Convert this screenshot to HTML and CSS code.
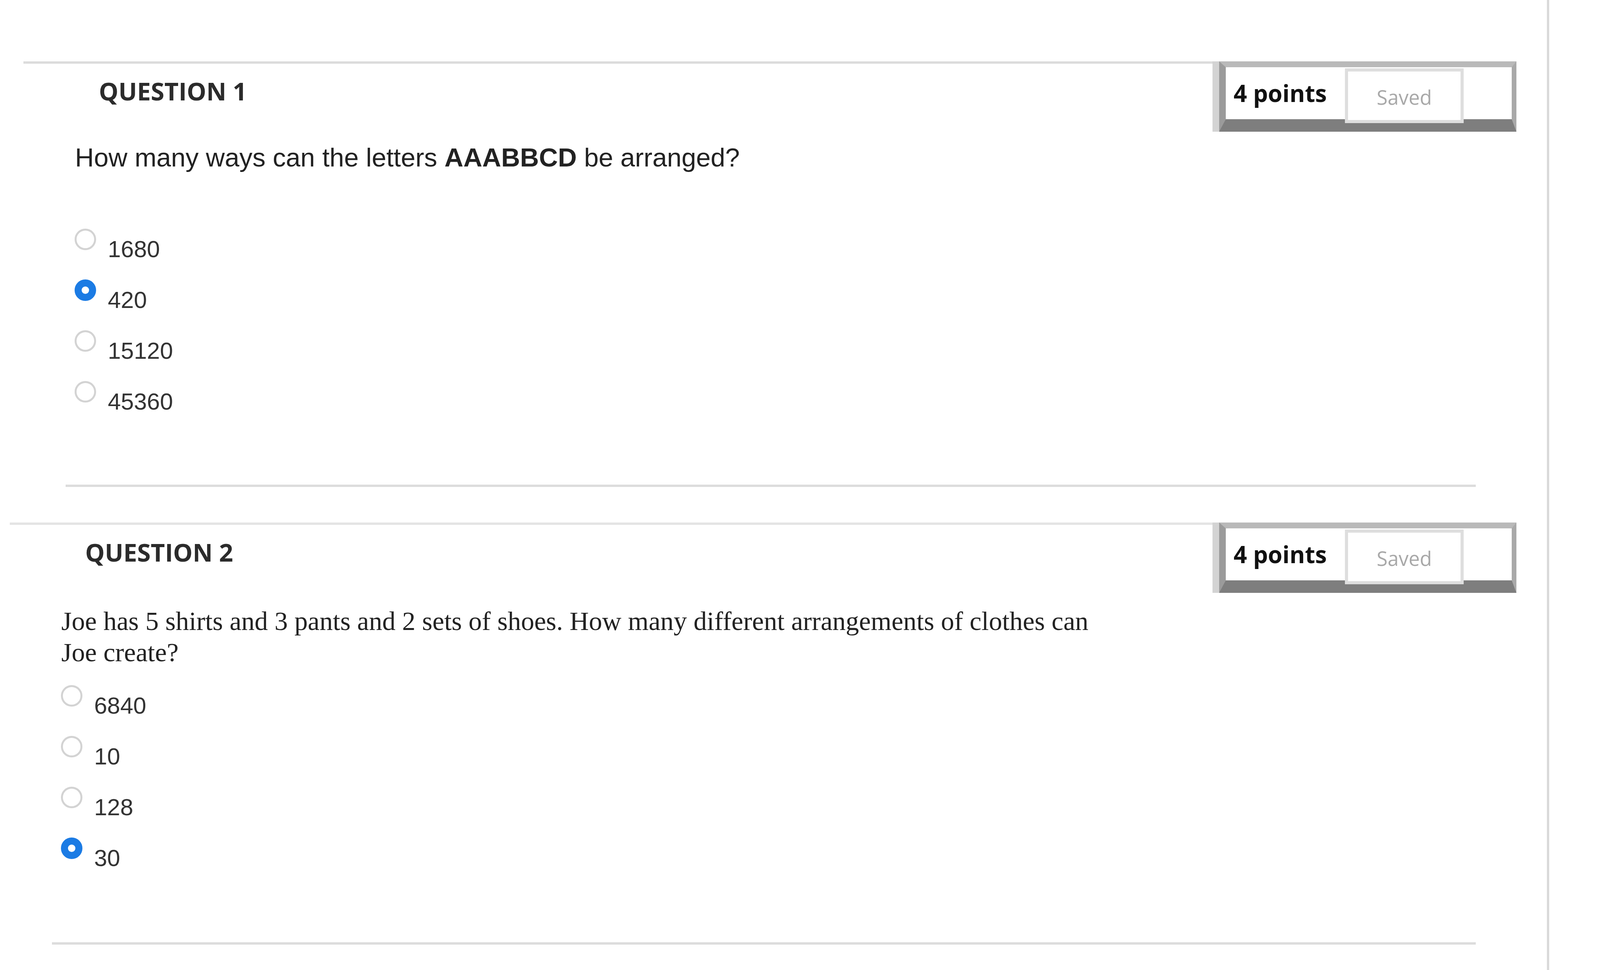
FILE: index.html
```html
<!DOCTYPE html>
<html lang="en">
<head>
  <meta charset="UTF-8" />
  <meta name="viewport" content="width=device-width, initial-scale=1.0"/>
  <title>Take Test: Counting</title>
  <link rel="stylesheet" href="styles.css">
</head>
<body>
  <div class="page">

    <!-- Question 1 -->
    <div class="question q1">
      <div class="q-header">
        <div class="q-rule"><h3 class="q-title">QUESTION 1</h3></div>
        <div class="points-box">
          <span class="points">4 points</span>
          <span class="saved">Saved</span>
        </div>
      </div>
      <p class="q-text">How many ways can the letters <b>AAABBCD</b> be arranged?</p>
      <ul class="answers">
        <li><input class="radio" type="radio" name="q1"><label>1680</label></li>
        <li><input class="radio" type="radio" name="q1" checked><label>420</label></li>
        <li><input class="radio" type="radio" name="q1"><label>15120</label></li>
        <li><input class="radio" type="radio" name="q1"><label>45360</label></li>
      </ul>
      <hr class="q-sep">
    </div>

    <!-- Question 2 -->
    <div class="question q2">
      <div class="q-header">
        <div class="q-rule"><h3 class="q-title">QUESTION 2</h3></div>
        <div class="points-box">
          <span class="points">4 points</span>
          <span class="saved">Saved</span>
        </div>
      </div>
      <p class="q-text serif">Joe has 5 shirts and 3 pants and 2 sets of shoes. How many different arrangements of clothes can Joe create?</p>
      <ul class="answers">
        <li><input class="radio" type="radio" name="q2"><label>6840</label></li>
        <li><input class="radio" type="radio" name="q2"><label>10</label></li>
        <li><input class="radio" type="radio" name="q2"><label>128</label></li>
        <li><input class="radio" type="radio" name="q2" checked><label>30</label></li>
      </ul>
      <hr class="q-sep">
    </div>

  </div>
</body>
</html>
```

FILE: styles.css
```css
body {
  margin: 0;
  background: #fff;
  font-family: "Liberation Sans", Arial, sans-serif;
  color: #222;
}

.page {
  width: 3966px;
  min-height: 2482px;
  box-sizing: border-box;
  padding-top: 157px;
  border-right: 6px solid #dadada;
}

.question {
  margin-right: 78px;
}

.q1 { margin-left: 60px; }
.q2 { margin-left: 25px; margin-top: 91px; }

/* Header: rule + points box */
.q-header {
  display: flex;
  align-items: flex-start;
}

.q-rule {
  flex: 1;
  border-top: 6px solid #dcdcdc;
}

.q2 .q-rule {
  border-top-color: #e4e4e4;
}

.q-title {
  margin: 0;
  padding: 28px 0 0 193px;
  font: 700 63px/84px "Open Sans", sans-serif;
  color: #2b2b2b;
}

.points-box {
  display: flex;
  align-items: flex-start;
  width: 732px;
  height: 133px;
  background: #fff;
  border-style: solid;
  border-width: 15px 12px 32px 17px;
  border-color: #b9b9b9 #a9a9a9 #7e7e7e #9b9b9b;
  box-shadow: -17px 0 0 #d3d3d3;
}

.points {
  width: 285px;
  padding: 24px 0 0 20px;
  font: 700 60px/84px "Open Sans", sans-serif;
  color: #111;
}

.saved {
  margin-top: 3px;
  width: 304px;
  height: 140px;
  box-sizing: border-box;
  border: 8px solid #dedede;
  background: #fff;
  display: flex;
  align-items: center;
  justify-content: center;
  padding-top: 6px;
  font: 400 51px "Open Sans", sans-serif;
  color: #a8a8a8;
}

/* Question text */
.q-text {
  margin: 30px 0 146px 132px;
  font-size: 67px;
  line-height: 72px;
  color: #222;
}

.q-text.serif {
  max-width: 2700px;
  margin-top: 32px;
  margin-bottom: 44px;
  font-family: "Liberation Serif", "Times New Roman", serif;
  font-size: 68px;
  line-height: 80px;
}

/* Answers */
.answers {
  list-style: none;
  margin: 0;
  padding: 0 0 0 131px;
  display: grid;
  row-gap: 42px;
}

.answers li {
  display: flex;
  align-items: flex-start;
}

.radio {
  appearance: none;
  -webkit-appearance: none;
  flex: none;
  margin: 0;
  width: 55px;
  height: 55px;
  box-sizing: border-box;
  border: 5px solid #d3d3d3;
  border-radius: 50%;
  background: #fff;
}

.radio:checked {
  border: 18px solid #1b7be4;
}

.answers label {
  margin: 18px 0 0 30px;
  font-size: 60px;
  line-height: 70px;
  color: #333;
}

.q-sep {
  margin: 177px 104px 0 108px;
  height: 0;
  border: 0;
  border-top: 6px solid #dcdcdc;
}

.q2 .q-sep {
  margin-top: 180px;
}
```
